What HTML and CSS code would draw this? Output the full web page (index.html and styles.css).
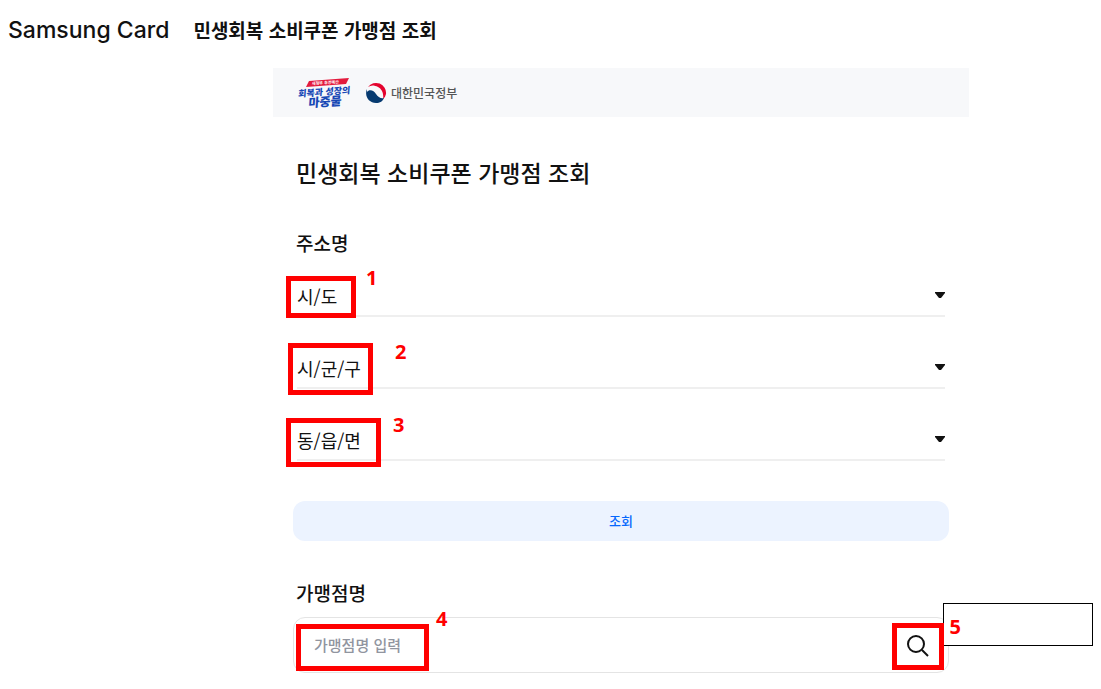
FILE: index.html
```html
<!DOCTYPE html>
<html lang="ko">
<head>
<meta charset="utf-8">
<title>민생회복 소비쿠폰 가맹점 조회</title>
<link rel="stylesheet" href="styles.css">
</head>
<body>
<header class="header">
  <span class="brand">Samsung Card</span>
  <span class="header-title">민생회복 소비쿠폰 가맹점 조회</span>
</header>
<main class="main">
  <div class="banner">
    <svg class="campaign" viewBox="0 0 58 32" role="img" aria-label="회복과 성장의 마중물">
      <path class="ribbon" d="M12 4 52 1 49 7 9 10Z"/>
      <text class="ribbon-text" x="15" y="8" transform="rotate(-4 15 8)">새정부 추경예산</text>
      <g transform="translate(1 20) rotate(-4) skewX(-8)">
        <text class="slogan" x="0" y="0">회복과 성장의</text>
        <text class="slogan slogan-big" x="11" y="11">마중물</text>
      </g>
    </svg>
    <svg class="emblem" viewBox="0 0 22 22" aria-hidden="true">
      <path fill="#e4032e" d="M3 5A10 10 0 0 1 21 12Q20.500 15 18 17C19 12 17 7 13 5C9 3 6 3 3 5Z"/>
      <path fill="#063a70" d="M2 7C-1 14 4 21 11 21C15 21 18 19 19 16C16 17 13 15 11 12C9 8 4 7 2 10Z"/>
    </svg>
    <span class="government">대한민국정부</span>
  </div>
  <form class="form">
    <h1 class="title">민생회복 소비쿠폰 가맹점 조회</h1>
    <h2 class="label">주소명</h2>
    <div class="fields">
      <div class="field">
        <select class="select" aria-label="시/도"><option>시/도</option></select>
        <svg class="arrow" viewBox="0 0 10 6" aria-hidden="true"><path d="M0 0H10V1L6 6H4L0 1Z"/></svg>
        <span class="mark mark-1"></span><b class="number number-1">1</b>
      </div>
      <div class="field">
        <select class="select" aria-label="시/군/구"><option>시/군/구</option></select>
        <svg class="arrow" viewBox="0 0 10 6" aria-hidden="true"><path d="M0 0H10V1L6 6H4L0 1Z"/></svg>
        <span class="mark mark-2"></span><b class="number number-2">2</b>
      </div>
      <div class="field">
        <select class="select" aria-label="동/읍/면"><option>동/읍/면</option></select>
        <svg class="arrow" viewBox="0 0 10 6" aria-hidden="true"><path d="M0 0H10V1L6 6H4L0 1Z"/></svg>
        <span class="mark mark-3"></span><b class="number number-3">3</b>
      </div>
    </div>
    <button class="submit" type="button">조회</button>
    <label class="label label-store" for="store">가맹점명</label>
    <div class="search">
      <input class="store" id="store" type="text" placeholder="가맹점명 입력">
      <button class="search-button" type="button" aria-label="검색">
        <svg class="glass" viewBox="0 0 24 24" aria-hidden="true"><circle cx="10" cy="11" r="8"/><path d="m16 17 6 6"/></svg>
      </button>
      <span class="mark mark-4"></span><b class="number number-4">4</b>
      <span class="note"></span>
      <span class="mark mark-5"></span><b class="number number-5">5</b>
    </div>
  </form>
</main>
</body>
</html>
```
FILE: styles.css
```css
* { box-sizing: border-box; }
body {
  margin: 0;
  background: #fff;
  color: #111;
  font-family: "Noto Sans CJK KR", sans-serif;
}
.header {
  display: flex;
  align-items: center;
  gap: 24px;
  height: 60px;
  padding: 0 8px;
}
.brand { font: 500 23px/32px Inter, sans-serif; }
.header-title { font-size: 19px; font-weight: 700; line-height: 32px; }
.main { margin: 8px 132px 0 273px; }
.banner {
  display: flex;
  align-items: center;
  height: 49px;
  padding: 0 24px;
  background: #f7f8fa;
}
.campaign { width: 58px; height: 32px; overflow: visible; }
.ribbon { fill: #e31b3d; }
.ribbon-text { fill: #fff; font-size: 4px; font-weight: 700; }
.slogan { fill: #1748b5; font-size: 9px; font-weight: 900; }
.slogan-big { font-size: 12px; }
.emblem { width: 22px; height: 22px; margin: 0 4px 0 10px; }
.government { color: #555; font-size: 12px; font-weight: 500; line-height: 18px; }
.form { padding: 38px 20px 16px; }
.title { margin: 0 3px; font-size: 23px; font-weight: 500; line-height: 34px; }
.label { display: block; margin: 40px 3px 0; font-size: 19px; font-weight: 500; line-height: 28px; }
.fields { display: grid; gap: 30px; margin: 18px 4px 0; }
.field { position: relative; height: 42px; border-bottom: 2px solid #efefef; }
.select {
  appearance: none;
  display: block;
  width: 100%;
  height: 40px;
  padding: 2px 0 0;
  border: 0;
  background: transparent;
  color: #111;
  font: 400 18px/38px "Noto Sans CJK KR", sans-serif;
}
.arrow { position: absolute; top: 17px; right: 0; width: 10px; height: 6px; fill: #111; }
.submit {
  display: block;
  width: 100%;
  height: 40px;
  margin-top: 40px;
  border: 0;
  border-radius: 12px;
  background: #ecf3ff;
  color: #0768fd;
  font: 500 13px/20px "Noto Sans CJK KR", sans-serif;
}
.label-store { margin-top: 38px; }
.search {
  position: relative;
  display: flex;
  height: 56px;
  margin-top: 10px;
  border: 1px solid #e4e4e4;
  border-radius: 12px;
}
.store {
  flex: 1;
  min-width: 0;
  padding: 0 20px;
  border: 0;
  background: transparent;
  font: 500 15px/24px "Noto Sans CJK KR", sans-serif;
}
.store::placeholder { color: #91959f; opacity: 1; }
.search-button { width: 60px; padding: 0; border: 0; background: transparent; }
.glass { display: block; width: 24px; height: 24px; margin: 0 auto; fill: none; stroke: #111; stroke-width: 2; }
.mark { position: absolute; border: 5px solid #f00; pointer-events: none; }
.mark-1 { left: -11px; top: 1px; width: 70px; height: 42px; }
.mark-2 { left: -9px; top: -4px; width: 85px; height: 52px; }
.mark-3 { left: -11px; top: -1px; width: 95px; height: 49px; }
.mark-4 { left: 2px; top: 6px; width: 133px; height: 47px; }
.mark-5 { right: 4px; top: 5px; width: 52px; height: 47px; }
.number {
  position: absolute;
  color: #f00;
  font: 700 20px/24px "Noto Sans", sans-serif;
}
.number-1 { left: 69px; top: -9px; }
.number-2 { left: 98px; top: -7px; }
.number-3 { left: 96px; top: -6px; }
.number-4 { left: 142px; top: -11px; }
.number-5 { right: -13px; top: -3px; }
.note {
  position: absolute;
  top: -15px;
  left: calc(100% - 5px);
  width: 150px;
  height: 43px;
  border: 1px solid #000;
  background: #fff;
}
```
